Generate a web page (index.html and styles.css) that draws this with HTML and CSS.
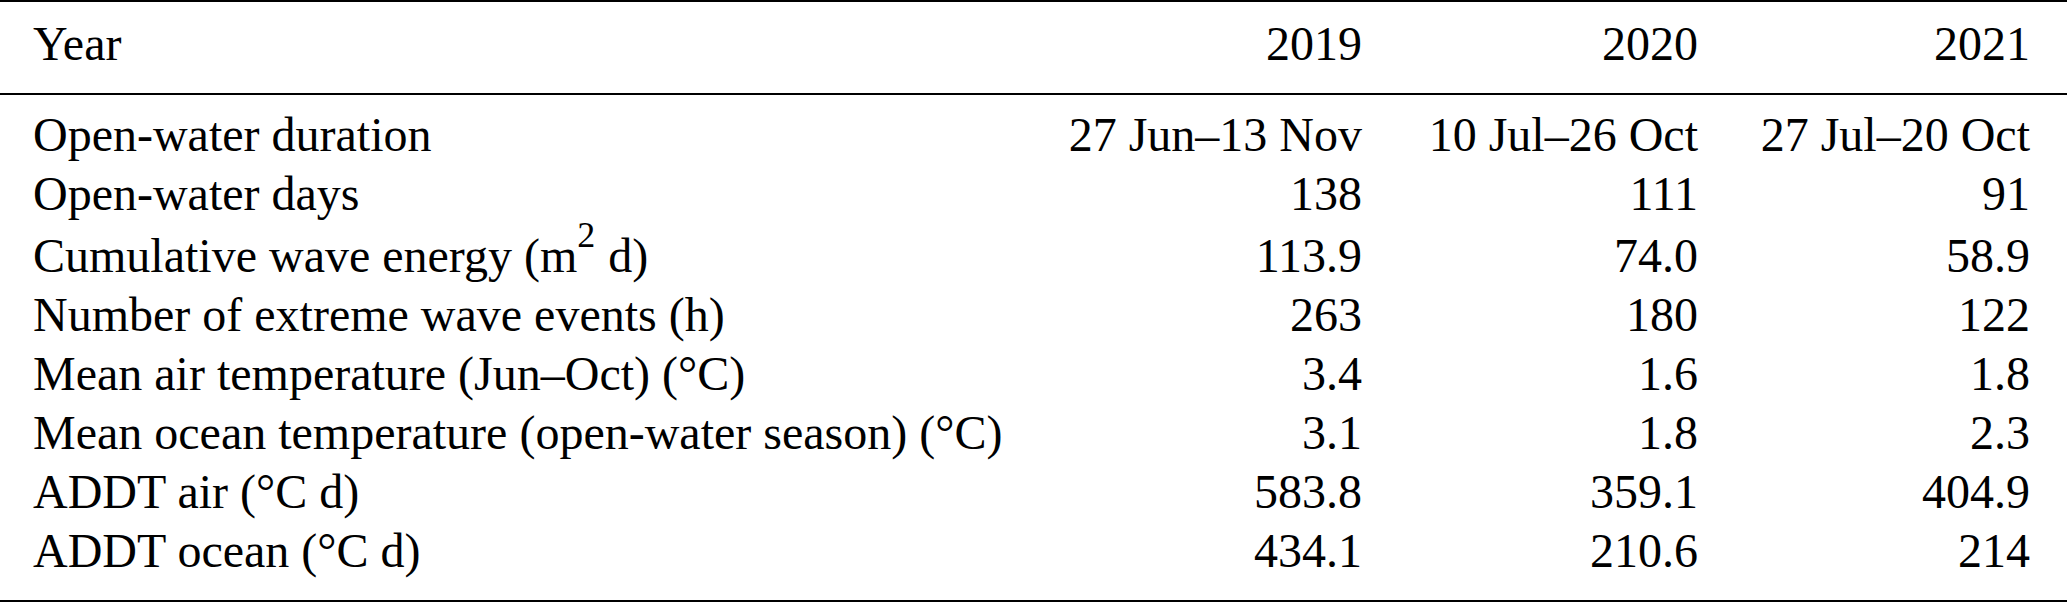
FILE: index.html
```html
<!DOCTYPE html>
<html lang="en">
<head>
  <meta charset="UTF-8" />
  <title>Open-water season statistics</title>
  <link rel="stylesheet" href="styles.css">
</head>
<body>
  <table class="stats">
    <colgroup>
      <col class="col-label">
      <col class="col-2019">
      <col class="col-2020">
      <col class="col-2021">
    </colgroup>
    <thead>
      <tr>
        <th>Year</th>
        <th>2019</th>
        <th>2020</th>
        <th>2021</th>
      </tr>
    </thead>
    <tbody>
      <tr>
        <td>Open-water duration</td>
        <td>27 Jun–13 Nov</td>
        <td>10 Jul–26 Oct</td>
        <td>27 Jul–20 Oct</td>
      </tr>
      <tr>
        <td>Open-water days</td>
        <td>138</td>
        <td>111</td>
        <td>91</td>
      </tr>
      <tr class="tall">
        <td>Cumulative wave energy (m<sup>2</sup> d)</td>
        <td>113.9</td>
        <td>74.0</td>
        <td>58.9</td>
      </tr>
      <tr>
        <td>Number of extreme wave events (h)</td>
        <td>263</td>
        <td>180</td>
        <td>122</td>
      </tr>
      <tr>
        <td>Mean air temperature (Jun–Oct) (°C)</td>
        <td>3.4</td>
        <td>1.6</td>
        <td>1.8</td>
      </tr>
      <tr>
        <td>Mean ocean temperature (open-water season) (°C)</td>
        <td>3.1</td>
        <td>1.8</td>
        <td>2.3</td>
      </tr>
      <tr>
        <td>ADDT air (°C d)</td>
        <td>583.8</td>
        <td>359.1</td>
        <td>404.9</td>
      </tr>
      <tr>
        <td>ADDT ocean (°C d)</td>
        <td>434.1</td>
        <td>210.6</td>
        <td>214</td>
      </tr>
    </tbody>
  </table>
</body>
</html>
```

FILE: styles.css
```css
body {
  margin: 0;
  background: #fff;
  color: #000;
  font-family: "Liberation Serif", "Times New Roman", serif;
}

.stats {
  width: 2067px;
  table-layout: fixed;
  border-collapse: separate;
  border-spacing: 0;
  font-size: 48px;
  line-height: 59px;
}

.col-label { width: 1040px; }
.col-2019 { width: 322px; }
.col-2020 { width: 336px; }
.col-2021 { width: 369px; }

.stats th,
.stats td {
  padding: 0;
  text-align: right;
  vertical-align: baseline;
  white-space: nowrap;
  font-weight: normal;
}

.stats th:first-child,
.stats td:first-child {
  text-align: left;
  padding-left: 33px;
}

.stats th:last-child,
.stats td:last-child {
  padding-right: 37px;
}

.stats thead th {
  padding-top: 12px;
  padding-bottom: 20px;
  border-top: 2px solid #000;
  border-bottom: 2px solid #000;
}

.stats tbody tr:first-child td { padding-top: 10px; }
.stats tbody tr.tall td { padding-top: 3px; }

.stats tbody tr:last-child td {
  padding-bottom: 20px;
  border-bottom: 2px solid #000;
}

.stats sup {
  font-size: 36px;
  line-height: 0;
  vertical-align: 25px;
  margin-right: 1px;
}
```
